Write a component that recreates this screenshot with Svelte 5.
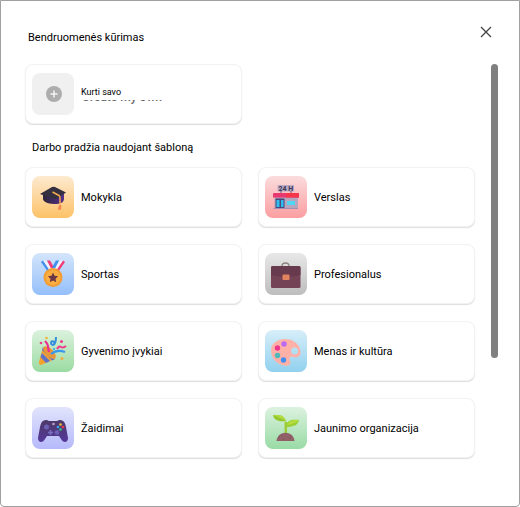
<script>
  const templates = [
    { id: 'school', label: 'Mokykla' },
    { id: 'business', label: 'Verslas' },
    { id: 'sport', label: 'Sportas' },
    { id: 'work', label: 'Profesionalus' },
    { id: 'events', label: 'Gyvenimo įvykiai' },
    { id: 'art', label: 'Menas ir kultūra' },
    { id: 'games', label: 'Žaidimai' },
    { id: 'youth', label: 'Jaunimo organizacija' },
  ]

  let open = $state(true)
</script>

{#snippet picture(id)}
  <svg viewBox="0 0 42 42" aria-hidden="true">
    {#if id === 'school'}
      <defs>
        <linearGradient id="capBase" x1="0" x2="1">
          <stop offset="0" stop-color="#2c2638" />
          <stop offset="1" stop-color="#56308c" />
        </linearGradient>
      </defs>
      <path d="M11 18v5c0 2 4 5 11 5s10-2 10-5v-7z" fill="url(#capBase)" />
      <path d="M8 18 20 11q1.500-.7 3 0l11 5.500L25 22.500q-2 1-4 .3z" fill="#35303f" />
      <path d="M20.500 16 27 19.500q1.200.7 1 3v6" fill="none" stroke="#f5a950" stroke-width="1.500" />
      <path d="m27 29 2.500.3-.6 4.500h-3z" fill="#f68754" />
    {:else if id === 'business'}
      <rect x="12.500" y="9" width="16.500" height="6.500" rx="1" fill="#b9a9c3" />
      <text x="20.800" y="14.500" text-anchor="middle" class="sign">24 H</text>
      <path d="M16 15v2M26 15v2" stroke="#6b5a7c" />
      <path d="M9.500 20H33v12.500H9.500z" fill="#b6a5bf" />
      <path d="M8 18q0-1 1-1h24q1 0 1 1v3.500H8z" fill="#e93770" />
      <path d="M21 17h12q1 0 1 1v3.500H21z" fill="#f5364b" />
      <path d="M10.500 22.500h9V32h-9z" fill="#4b4679" />
      <path d="M11.500 24h3v7h-3zm4.500 0h2.500v7H16z" fill="#2fbdf0" />
      <path d="M22 25h8v4h-8z" fill="#4fd6f2" />
      <path d="M8.500 32H33v1H8.500z" fill="#a08fae" />
    {:else if id === 'sport'}
      <path d="m9 9 2-1.500 8 8-4 2z" fill="#438fed" />
      <path d="m11 7.500 3 0 6 8-3 1z" fill="#f1f1fc" />
      <path d="m15 7.500 3 0 4 7-3 1z" fill="#f23a78" />
      <path d="m33 9-2-1.500-8 8 4 2z" fill="#f23a78" />
      <path d="m31 7.500-3 0-6 8 3 1z" fill="#f1f1fc" />
      <path d="m27 7.500-3 0-4 7 3 1z" fill="#438fed" />
      <circle cx="21" cy="24.500" r="9.500" fill="#f19c34" />
      <circle cx="21" cy="24.500" r="7.500" fill="#fbae40" />
      <path d="m21 19.500 1.500 3.300 3.600.4-2.600 2.500.7 3.600-3.200-1.800-3.200 1.800.7-3.600-2.600-2.500 3.600-.4z" fill="#6b3746" />
    {:else if id === 'work'}
      <path d="M17 14v-1q0-3 3.500-3t3.500 3v1" fill="none" stroke="#8e8080" stroke-width="1.300" />
      <rect x="6" y="13" width="29.500" height="22" rx="1.500" fill="#754356" />
      <path d="M6 15q0-2 2-2h25.500q2 0 2 2v7q-14 4-29.500 0z" fill="#673a4e" />
      <rect x="17.500" y="21.500" width="7" height="5.500" rx="1" fill="#e08460" />
    {:else if id === 'events'}
      <path d="m11 17 12 12-14 6q-2.500 0-2-3z" fill="#f4a22f" />
      <path d="m10 20 1-3 12 12-3 1.500zM8.500 27l1.500-4 8 8-4 2z" fill="#6272c8" />
      <ellipse cx="17.500" cy="22.500" rx="4" ry="8" transform="rotate(-45 17.500 22.500)" fill="#e8983a" />
      <path d="M17 22q-1-4-1-6t-3-5" fill="none" stroke="#ed2f8e" stroke-width="2.200" />
      <path d="M19 24q6-5 14-2" fill="none" stroke="#3798ee" stroke-width="2.200" />
      <path d="M24 7q0 7-3 8-3-.5-1.500-3.500 3-1 3 3" fill="none" stroke="#368ddd" stroke-width="2" />
      <path d="M25 19q2-3.500 4-2t5-1" fill="none" stroke="#ef398d" stroke-width="2" />
      <circle cx="9" cy="13" r="1.300" fill="#e6418f" />
      <circle cx="14.500" cy="8" r="1.300" fill="#f2b13c" />
      <circle cx="29.500" cy="11.500" r="1.500" fill="#ed3b8f" />
      <circle cx="22" cy="19" r="1.200" fill="#45b6df" />
      <circle cx="30" cy="28.500" r="1.500" fill="#f2ac45" />
    {:else if id === 'art'}
      <path fill-rule="evenodd" d="M6 20C6 7 30 4 35 19c2 7-2 9-7 8-4-1-4 2-3 4 2 4-3 6-8 4C11 33 6 28 6 20zm23.500-2.500a3.500 3.500 0 1 0 .1 7 3.500 3.500 0 0 0 0-7z" fill="#ffb1a8" />
      <circle cx="19" cy="14" r="2.700" fill="#b969f2" />
      <circle cx="12.500" cy="18" r="2.700" fill="#ed358d" />
      <circle cx="12.500" cy="25.500" r="2.700" fill="#4eb9bb" />
      <circle cx="18.500" cy="30" r="2.700" fill="#438ff0" />
    {:else if id === 'games'}
      <defs>
        <linearGradient id="pad" x2="0" y2="1">
          <stop offset="0" stop-color="#4d3a68" />
          <stop offset="1" stop-color="#55389a" />
        </linearGradient>
      </defs>
      <path d="M11 14q3-2 6 0h8q3-2 6 0 2 1 3 6l2 11c0 5-5 5-7 1l-2-3H15l-2 3c-2 4-7 4-7-1l2-11q1-5 3-6z" fill="url(#pad)" />
      <circle cx="14.500" cy="20" r="2.500" fill="#6c62b5" />
      <circle cx="25" cy="25.500" r="2.300" fill="#6c62b5" />
      <path d="M16 25.500h5M18.500 23v5" stroke="#7770c3" stroke-width="1.600" />
      <circle cx="21.500" cy="17" r="1.300" fill="#b6a4bd" />
      <circle cx="28.500" cy="17.500" r="1.300" fill="#f4bd35" />
      <circle cx="31" cy="20" r="1.300" fill="#ef374b" />
      <circle cx="26" cy="20" r="1.300" fill="#35aaf3" />
      <circle cx="28.500" cy="22.500" r="1.300" fill="#31cf82" />
    {:else if id === 'youth'}
      <path d="M20.800 29V15" stroke="#9ccb35" stroke-width="2.500" />
      <path d="M21.500 16C20 7 13 8 8 8c1 5 5 7 13 6z" fill="#93c92f" />
      <path d="M8 8c5 0 11-1 13 6-5-3-8-4-13-6z" fill="#b2dc40" />
      <path d="M21 20c0-7 7-8 13-7-1 5-5 7-13 7z" fill="#98d035" />
      <path d="M22 18c3-5 7-5 12-5-3 3-7 4-12 5z" fill="#b6dc3e" />
      <path d="M11.500 34c1-11 17-11 18 0z" fill="#915f66" />
      <path d="M14 30h1m3 2h1m5-1h1m-9-3h1m8 1h1" stroke="#7c4f5a" />
    {/if}
  </svg>
{/snippet}

{#if open}
  <div class="dialog" role="dialog" aria-labelledby="title">
    <header>
      <h1 id="title">Bendruomenės kūrimas</h1>
      <button class="close" aria-label="Uždaryti" onclick={() => (open = false)}>
        <svg viewBox="0 0 12 12" aria-hidden="true">
          <path d="m1 1 10 10M11 1 1 11" fill="none" stroke="#424242" stroke-width="1.300" />
        </svg>
      </button>
    </header>

    <div class="body">
      <div class="content">
        <div class="grid">
          <button class="card">
            <span class="tile own">
              <svg viewBox="0 0 42 42" aria-hidden="true">
                <circle cx="22" cy="21" r="8" fill="#adadad" />
                <path d="M18.500 21h7M22 17.500v7" stroke="#f4f4f4" stroke-width="1.500" />
              </svg>
            </span>
            <span class="own-label">
              Kurti savo
              <span class="under" aria-hidden="true"><span>Create my own</span></span>
            </span>
          </button>
        </div>

        <h2>Darbo pradžia naudojant šabloną</h2>

        <div class="grid">
          {#each templates as template}
            <button class="card">
              <span class="tile {template.id}">{@render picture(template.id)}</span>
              <span class="label">{template.label}</span>
            </button>
          {/each}
        </div>
      </div>
      <div class="scrollbar"></div>
    </div>
  </div>
{/if}

<style>
  :global(body) {
    background: #fff;
  }

  .dialog {
    box-sizing: border-box;
    min-height: 100vh;
    padding: 24px 21px 48px 24px;
    border: 1px solid #a0a0a0;
    border-radius: 0 0 4px 4px;
    font-family: Roboto, 'Liberation Sans', sans-serif;
    font-size: 11px;
    line-height: 16px;
    color: #000;
    background: #fff;
  }

  header {
    display: flex;
    justify-content: space-between;
    align-items: flex-start;
    height: 39px;
  }

  h1,
  h2 {
    margin: 0;
    font-size: 11px;
    font-weight: 400;
  }

  h1 {
    padding: 5px 3px;
  }

  h2 {
    padding: 16px 7px 11px;
  }

  button {
    font: inherit;
    color: inherit;
    cursor: pointer;
  }

  .close {
    display: flex;
    padding: 1px 6px;
    border: 0;
    background: none;
  }

  .close svg {
    width: 12px;
    height: 12px;
  }

  .body {
    display: flex;
    gap: 16px;
  }

  .content {
    flex: 1;
  }

  .grid {
    display: grid;
    grid-template-columns: 1fr 1fr;
    gap: 17px 16px;
  }

  .card {
    display: flex;
    align-items: center;
    gap: 7px;
    height: 60px;
    padding: 0 6px;
    border: 1px solid #f2f2f2;
    border-radius: 8px;
    background: #fff;
    box-shadow: 0 1px 1px #dedede;
    text-align: left;
  }

  .label {
    padding-top: 2px;
  }

  .tile {
    width: 42px;
    height: 42px;
    border-radius: 8px;
    overflow: hidden;
  }

  .tile svg {
    display: block;
  }

  .own {
    background: #f0f0f0;
  }

  .own-label {
    position: relative;
    padding-bottom: 4px;
    font-size: 9px;
  }

  .under {
    position: absolute;
    top: 16px;
    left: 1px;
    display: flex;
    align-items: flex-end;
    height: 5px;
    overflow: hidden;
    font-size: 12px;
    font-weight: 500;
    color: #666;
    white-space: nowrap;
  }

  .sign {
    font-size: 7px;
    font-weight: 700;
    fill: #3d3555;
  }

  .school {
    background: linear-gradient(#fdead0, #fdc268);
  }

  .business {
    background: linear-gradient(#fbdcdd, #fb9ea1);
  }

  .sport {
    background: linear-gradient(#d4e5fb, #94bffa);
  }

  .work {
    background: linear-gradient(#e8e8e8, #bdbdbd);
  }

  .events {
    background: linear-gradient(#dcf2de, #9bdba2);
  }

  .art {
    background: linear-gradient(#d7eef9, #91d1ee);
  }

  .games {
    background: linear-gradient(#e2e4fc, #b5b9fa);
  }

  .youth {
    background: linear-gradient(#dcf2df, #99dba5);
  }

  .scrollbar {
    width: 7px;
    height: 294px;
    border-radius: 4px;
    background: #808080;
  }
</style>
